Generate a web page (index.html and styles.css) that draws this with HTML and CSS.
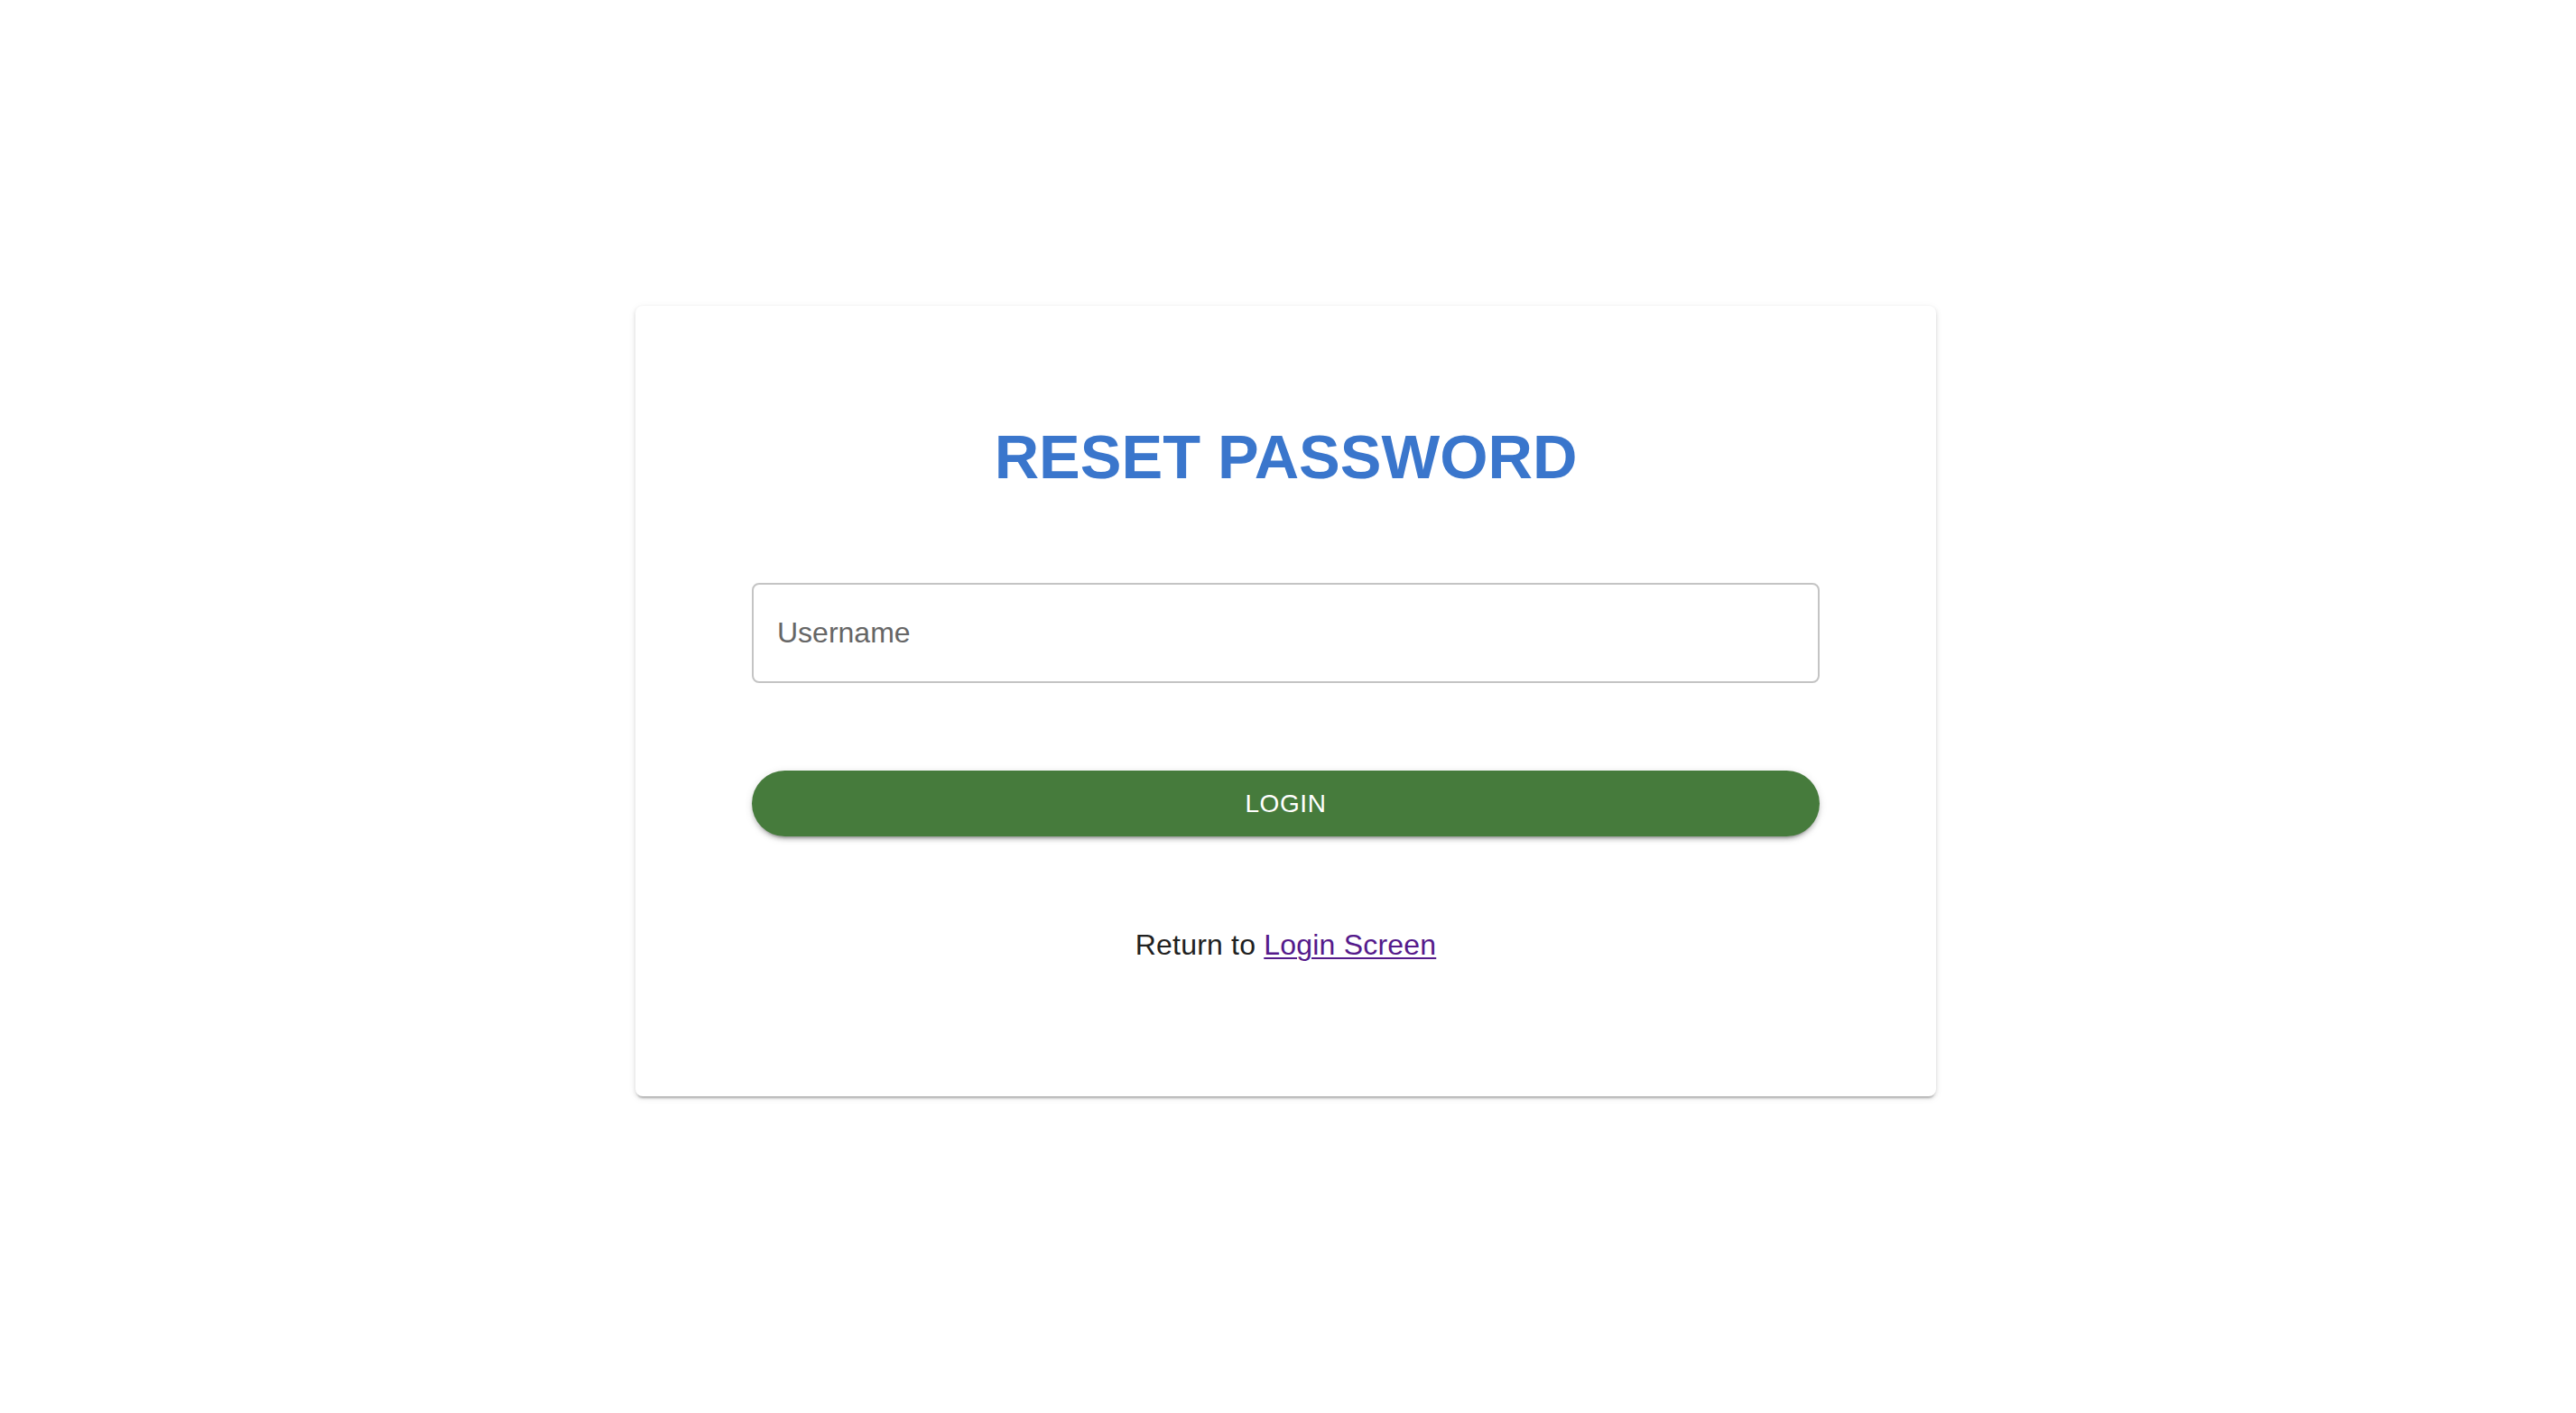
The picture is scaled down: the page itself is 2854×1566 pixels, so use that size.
FILE: index.html
```html
<!DOCTYPE html>
<html lang="en">
<head>
<meta charset="utf-8">
<title>Reset Password</title>
<link rel="stylesheet" href="styles.css">
</head>
<body>
  <main class="page">
    <section class="card">
      <h1 class="title">RESET PASSWORD</h1>
      <form class="form" onsubmit="return false">
        <input class="field" type="text" placeholder="Username">
        <button class="btn" type="submit">LOGIN</button>
      </form>
      <p class="return">Return to <a class="link" href="#">Login Screen</a></p>
    </section>
  </main>
</body>
</html>
```

FILE: styles.css
```css
html, body {
  margin: 0;
  padding: 0;
  background: #ffffff;
}

body {
  font-family: "Liberation Sans", Arial, Helvetica, sans-serif;
  color: #212121;
}

.page {
  min-height: 1566px;
  box-sizing: border-box;
  display: flex;
  justify-content: center;
  align-items: flex-start;
  padding: 339px 5px 0 0;
}

.card {
  width: 1441px;
  box-sizing: border-box;
  padding: 128px 129px 149px;
  background: #ffffff;
  border-radius: 8px;
  box-shadow: 0 4px 2px -2px rgba(0,0,0,0.2), 0 2px 4px 0 rgba(0,0,0,0.12), 0 2px 8px 0 rgba(0,0,0,0.08);
  display: flex;
  flex-direction: column;
}

.title {
  margin: 0;
  font-size: 68.5px;
  line-height: 80px;
  font-weight: 700;
  text-align: center;
  color: #3a76cc;
  letter-spacing: 0;
}

.form {
  margin-top: 99px;
  display: flex;
  flex-direction: column;
  gap: 97px;
}

.field {
  height: 111px;
  box-sizing: border-box;
  border: 2px solid #c4c4c4;
  border-radius: 8px;
  padding: 0 26px;
  font-family: "Liberation Sans", Arial, sans-serif;
  font-size: 32px;
  color: #212121;
  background: #ffffff;
  outline: none;
}

.field::placeholder {
  color: #666666;
  opacity: 1;
}

.btn {
  height: 73px;
  border: none;
  border-radius: 37px;
  background: #467b3c;
  color: #ffffff;
  font-family: "Liberation Sans", Arial, sans-serif;
  font-size: 28px;
  letter-spacing: 0.6px;
  font-weight: 400;
  box-shadow: 0 6px 2px -4px rgba(0,0,0,0.2), 0 4px 4px 0 rgba(0,0,0,0.14), 0 2px 10px 0 rgba(0,0,0,0.12);
  cursor: pointer;
}

.return {
  margin: 102px 0 0;
  font-size: 32px;
  line-height: 37px;
  letter-spacing: 0.2px;
  text-align: center;
  color: #212121;
}

.link {
  color: #551a8b;
  text-decoration: underline;
  text-underline-offset: 3px;
  text-decoration-thickness: 2px;
}
```
